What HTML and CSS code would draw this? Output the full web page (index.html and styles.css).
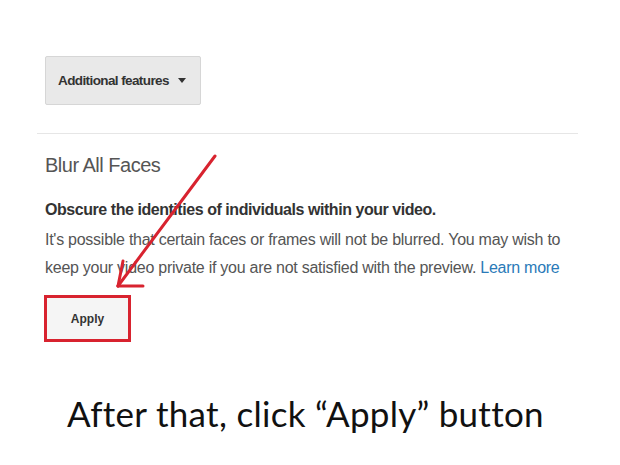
FILE: index.html
```html
<!DOCTYPE html>
<html>
<head>
<meta charset="utf-8">
<link rel="stylesheet" href="styles.css">
</head>
<body>
<div class="slide">
  <div class="panel">
    <div class="features-row">
      <button class="features-btn">Additional features <span class="caret"></span></button>
    </div>
    <hr class="divider">
    <h2 class="title">Blur All Faces</h2>
    <p class="lead">Obscure the identities of individuals within your video.</p>
    <p class="desc">It's possible that certain faces or frames will not be blurred. You may wish to<br>keep your video private if you are not satisfied with the preview. <a class="link">Learn more</a></p>
    <div class="apply-row">
      <button class="apply-btn">Apply</button>
    </div>
  </div>
  <p class="caption">After that, click “Apply” button</p>
  <svg class="arrow" width="620" height="465" viewBox="0 0 620 465">
    <g stroke="#d8232f" stroke-width="3" stroke-linecap="round" fill="none">
      <line x1="215" y1="156" x2="118" y2="286"/>
      <line x1="118" y1="286" x2="123" y2="261"/>
      <line x1="118" y1="286" x2="143" y2="286"/>
    </g>
  </svg>
</div>
</body>
</html>
```
FILE: styles.css
```css
html, body {
  margin: 0;
  padding: 0;
  background: #fff;
}
.slide {
  position: relative;
  width: 620px;
  height: 465px;
  overflow: hidden;
  font-family: "Liberation Sans", Arial, sans-serif;
}
.panel {
  padding: 56px 42px 0 45px;
}
.features-row {
  display: flex;
}
.features-btn {
  height: 49px;
  width: 156px;
  background: #e9e9e9;
  border: 1px solid #d6d6d6;
  border-radius: 2px;
  font-family: "Liberation Sans", Arial, sans-serif;
  font-size: 13.5px;
  font-weight: bold;
  color: #333;
  display: flex;
  align-items: center;
  gap: 9px;
  padding: 0 0 0 12px;
  letter-spacing: -0.6px;
}
.caret {
  width: 0;
  height: 0;
  border-left: 4px solid transparent;
  border-right: 4px solid transparent;
  border-top: 5px solid #333;
}
.divider {
  margin: 28px 0 0 -8px;
  border: 0;
  border-top: 1px solid #e6e6e6;
  height: 0;
}
.title {
  margin: 19px 0 0 0;
  font-size: 20px;
  line-height: 24px;
  font-weight: normal;
  color: #555;
  letter-spacing: -0.5px;
}
.lead {
  margin: 19px 0 0 0;
  font-size: 16px;
  line-height: 28px;
  font-weight: bold;
  color: #333;
  letter-spacing: -0.45px;
}
.desc {
  margin: 2px 0 0 0;
  font-size: 16px;
  line-height: 28px;
  color: #555;
  letter-spacing: -0.26px;
}
.link {
  color: #2a7ab8;
}
.apply-row {
  display: flex;
  margin-top: 13px;
  margin-left: -1px;
}
.apply-btn {
  width: 87px;
  height: 47px;
  background: #f5f5f5;
  border: 3px solid #d8232f;
  font-family: "Liberation Sans", Arial, sans-serif;
  font-size: 12px;
  font-weight: bold;
  color: #333;
  padding: 0;
}
.caption {
  margin: 50px 0 0 67px;
  font-family: Lato, "Open Sans", sans-serif;
  font-size: 35px;
  letter-spacing: 0.3px;
  color: #111;
}
.arrow {
  position: absolute;
  left: 0;
  top: 0;
  pointer-events: none;
}
```
